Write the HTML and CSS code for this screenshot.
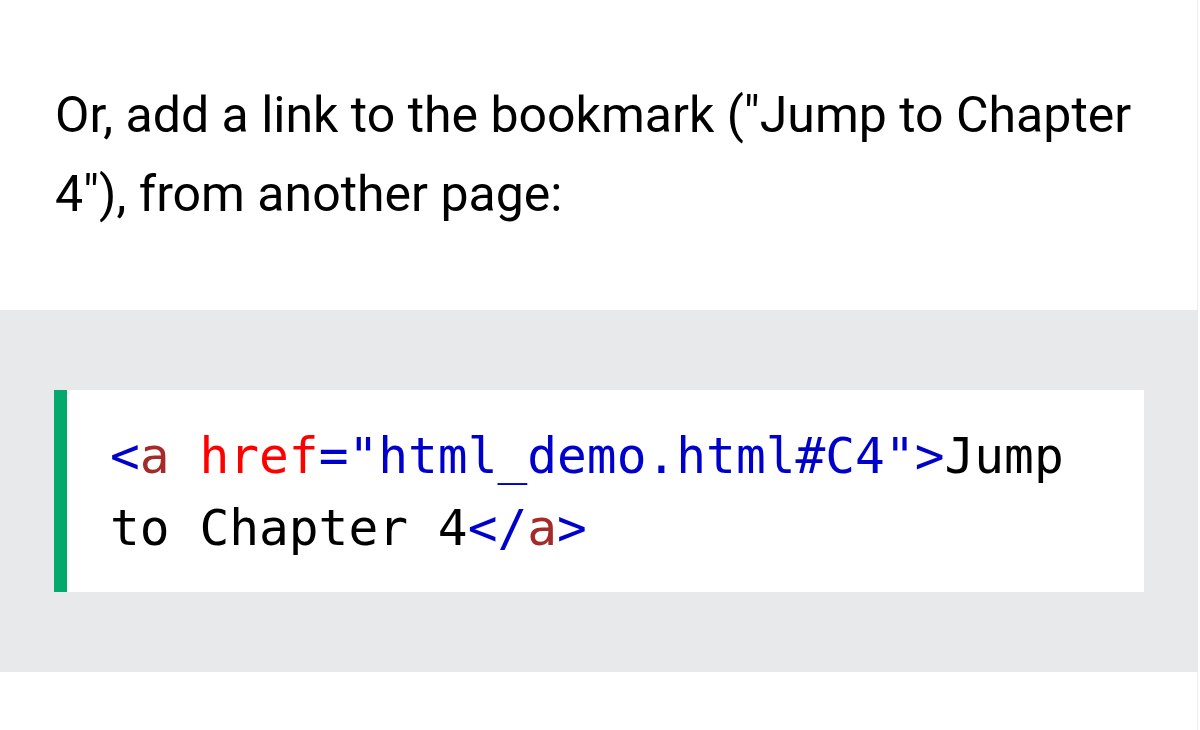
FILE: index.html
```html
<!DOCTYPE html>
<html>
<head>
<meta charset="utf-8">
<link rel="stylesheet" href="styles.css">
</head>
<body>
<div class="page">
  <p class="intro">Or, add a link to the bookmark ("Jump to Chapter 4"), from another page:</p>
  <div class="example">
    <div class="code"><span class="tag">&lt;</span><span class="tagname">a</span> <span class="attr">href</span><span class="val">="html_demo.html#C4"</span><span class="tag">&gt;</span>Jump to Chapter 4<span class="tag">&lt;/</span><span class="tagname">a</span><span class="tag">&gt;</span></div>
  </div>
</div>
</body>
</html>
```
FILE: styles.css
```css
html, body {
  margin: 0;
  padding: 0;
  background: #ffffff;
}
.page {
  width: 1197px;
  min-height: 730px;
  border-right: 1px solid #eeeeee;
  background: #ffffff;
}
.intro {
  margin: 0;
  padding: 76px 60px 76px 55px;
  font-family: Roboto, "Noto Sans", sans-serif;
  font-size: 50px;
  line-height: 79px;
  color: #000000;
}
.example {
  background: #e7e9eb;
  padding: 80px 54px 80px 54px;
  width: 1198px;
  box-sizing: border-box;
}
.code {
  background: #ffffff;
  border-left: 13px solid #04aa6d;
  padding: 30px 40px 28px 43px;
  font-family: "DejaVu Sans Mono", "Liberation Mono", monospace;
  font-size: 49.5px;
  line-height: 72px;
  color: #000000;
}
.tag { color: #0000cd; }
.tagname { color: #a52a2a; }
.attr { color: #ff0000; }
.val { color: #0000cd; }
```
